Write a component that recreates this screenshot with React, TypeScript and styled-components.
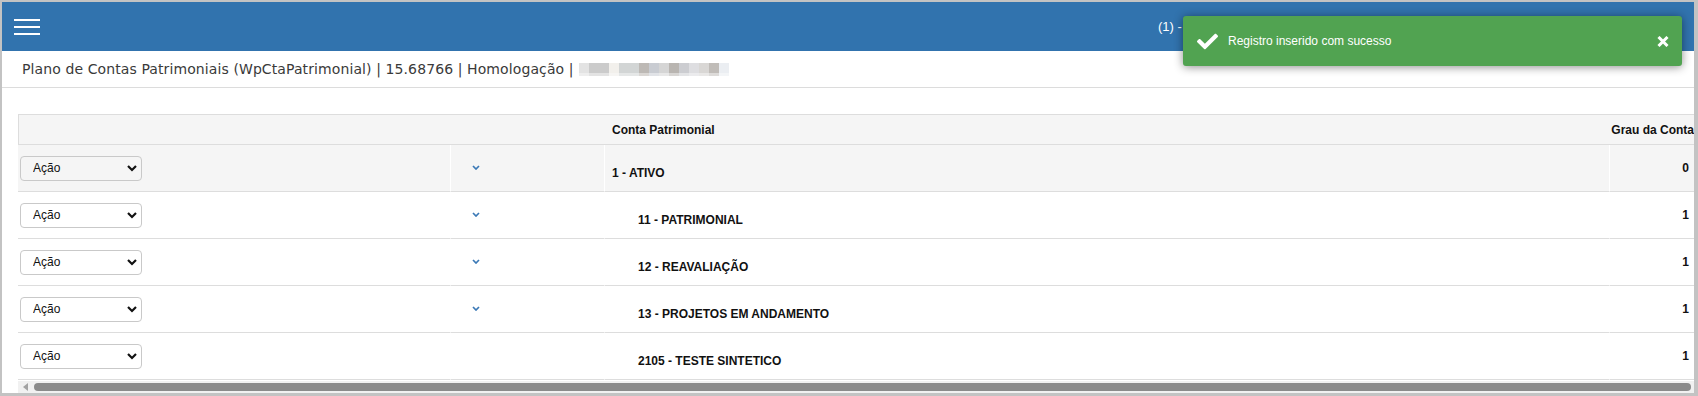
import React from "react";
import styled, {createGlobalStyle} from "styled-components";
import {FaCheck} from "react-icons/fa";

const GlobalStyle = createGlobalStyle`
  html, body {
    margin: 0;
    padding: 0;
    background: #fff;
  }
  body {
    font-family: "Liberation Sans", Arial, sans-serif;
  }
`

const Frame = styled.div`
  position: relative;
  width: 1698px;
  height: 396px;
  box-sizing: border-box;
  border-style: solid;
  border-color: #c3c3c3;
  border-width: 2px 4px 3px 2px;
  overflow: hidden;
  display: flex;
  flex-direction: column;
  background: #fff;
`

const TopBar = styled.header`
  height: 49px;
  flex-shrink: 0;
  background: #3173ae;
  display: flex;
  align-items: center;
  padding-left: 12px;
`

const MenuButton = styled.div`
  display: flex;
  align-items: center;
  cursor: pointer;
`

const UserInfo = styled.span`
  margin-left: auto;
  width: 536px;
  color: #fff;
  font-size: 13px;
  white-space: nowrap;
  overflow: hidden;
`

const TitleBar = styled.div`
  height: 36px;
  flex-shrink: 0;
  display: flex;
  align-items: center;
  padding-left: 20px;
  border-bottom: 1px solid #dcdcdc;
  color: #3a3a3a;
  font-family: "DejaVu Sans", Verdana, sans-serif;
  font-size: 14px;
  letter-spacing: 0.1px;
  white-space: nowrap;
`

const Redacted = styled.div`
  display: grid;
  grid-template-columns: repeat(15, 10px);
  grid-template-rows: 10px 3px;
  margin-left: 5px;
`

const Pixel = styled.span<{ $tone: string }>`
  background: ${p => p.$tone};
`

const Content = styled.main`
  flex: 1;
  display: flex;
  flex-direction: column;
  padding: 26px 0 0 16px;
  min-height: 0;
`

const TableViewport = styled.div`
  flex: 1;
  overflow: hidden;
  min-height: 0;
`

const Table = styled.table`
  width: 1690px;
  border-collapse: separate;
  border-spacing: 0;
  table-layout: fixed;
  font-size: 12px;
  color: #111;
`

const HeadCell = styled.th<{ $align?: string; $padLeft?: number; $padRight?: number }>`
  height: 29px;
  padding: 0 ${p => p.$padRight ?? 0}px 0 ${p => p.$padLeft ?? 7}px;
  background: #f5f5f5;
  border-top: 1px solid #dddddd;
  border-bottom: 1px solid #dddddd;
  text-align: ${p => p.$align ?? "left"};
  font-weight: bold;
  white-space: nowrap;
  &:first-child {
    border-left: 1px solid #dddddd;
  }
`

const Row = styled.tr<{ $shaded: boolean }>`
  background: ${p => p.$shaded ? "#f5f5f5" : "#fff"};
`

const Cell = styled.td`
  height: 47px;
  padding: 0;
  border-bottom: 1px solid #dddddd;
  border-right: 1px solid #fff;
  vertical-align: middle;
  box-sizing: border-box;
`

const ActionCell = styled(Cell)`
  padding-left: 2px;
`

const ToggleCell = styled(Cell)`
  padding-left: 21px;
`

const NameCell = styled(Cell)<{ $level: number }>`
  padding: 10px 0 0 ${p => 7 + p.$level * 26}px;
  font-weight: bold;
  white-space: nowrap;
`

const GradeCell = styled(Cell)`
  padding-right: 19px;
  text-align: right;
  font-weight: bold;
  border-right: none;
`

const SelectWrap = styled.div`
  position: relative;
  width: 122px;
  height: 25px;
`

const Select = styled.select`
  appearance: none;
  width: 100%;
  height: 100%;
  box-sizing: border-box;
  border: 1px solid #c9c9c9;
  border-radius: 4px;
  background: transparent;
  padding: 0 0 0 12px;
  font-family: "Liberation Sans", Arial, sans-serif;
  font-size: 12px;
  color: #111;
  outline: none;
`

const SelectArrow = styled.svg`
  position: absolute;
  right: 5px;
  top: 9px;
  pointer-events: none;
`

const Toggle = styled.svg`
  display: block;
  margin-top: -2px;
`

const ScrollBar = styled.div`
  height: 12px;
  flex-shrink: 0;
  margin-top: 1px;
  background: #f1f1f1;
  display: flex;
  align-items: center;
`

const ScrollArrow = styled.span`
  width: 0;
  height: 0;
  margin: 0 6px 0 5px;
  border-top: 4px solid transparent;
  border-bottom: 4px solid transparent;
  border-right: 5px solid #a3a3a3;
`

const ScrollThumb = styled.div`
  flex: 1;
  height: 8px;
  margin-right: 3px;
  border-radius: 4px;
  background: #8b8b8b;
`

const Toast = styled.div`
  position: absolute;
  top: 14px;
  right: 12px;
  width: 499px;
  height: 50px;
  box-sizing: border-box;
  display: flex;
  align-items: center;
  padding: 0 13px 0 14px;
  border-radius: 3px;
  background: #51a351;
  color: #fff;
  font-size: 12px;
  box-shadow: 0 1px 10px rgba(0, 0, 0, 0.45);
  z-index: 10;
`

const ToastIcon = styled(FaCheck)`
  width: 21px;
  height: 21px;
  margin-right: 10px;
  flex-shrink: 0;
`

const ToastText = styled.span`
  flex: 1;
`

const ToastClose = styled.svg`
  cursor: pointer;
`

interface Account {
  name: string;
  level: number;
  grade: number;
  expandable: boolean;
}

const accounts: Account[] = [
  {name: "1 - ATIVO", level: 0, grade: 0, expandable: true},
  {name: "11 - PATRIMONIAL", level: 1, grade: 1, expandable: true},
  {name: "12 - REAVALIAÇÃO", level: 1, grade: 1, expandable: true},
  {name: "13 - PROJETOS EM ANDAMENTO", level: 1, grade: 1, expandable: true},
  {name: "2105 - TESTE SINTETICO", level: 1, grade: 1, expandable: false},
]

// pixelated redaction of the user name
const redactTop = ["#e3e3e3", "#cbcbcb", "#cbcbcb", "#f2f0ec", "#d2d5d5", "#d2d5d5", "#bdb9b5", "#c9ccd2",
  "#d5d5d5", "#b9b5b1", "#cccdd1", "#dedee1", "#d9d7d5", "#c0bcb8", "#ebeef2"]
const redactBottom = ["#eeeeee", "#e3e3e3", "#e3e3e3", "#f6f5f3", "#e5e7e7", "#e5e7e7", "#dad7d4", "#e1e3e7",
  "#e8e8e8", "#d8d6d4", "#e3e4e6", "#ebebed", "#e9e8e7", "#dddbd9", "#f3f5f7"]

const App = () => {
  return (
    <Frame>
      <GlobalStyle/>
      <TopBar>
        <MenuButton>
          <svg width="26" height="16" viewBox="0 0 26 16">
            <rect x="0" y="0" width="26" height="2" fill="#fff"/>
            <rect x="0" y="7" width="26" height="2" fill="#fff"/>
            <rect x="0" y="14" width="26" height="2" fill="#fff"/>
          </svg>
        </MenuButton>
        <UserInfo>(1) - ADMINISTRADOR</UserInfo>
      </TopBar>

      <TitleBar>
        Plano de Contas Patrimoniais (WpCtaPatrimonial) | 15.68766 | Homologação |
        <Redacted>
          {redactTop.map((c, i) => <Pixel key={"t" + i} $tone={c}/>)}
          {redactBottom.map((c, i) => <Pixel key={"b" + i} $tone={c}/>)}
        </Redacted>
      </TitleBar>

      <Content>
        <TableViewport>
          <Table>
            <colgroup>
              <col style={{width: 433}}/>
              <col style={{width: 154}}/>
              <col style={{width: 1005}}/>
              <col/>
            </colgroup>
            <thead>
              <tr>
                <HeadCell/>
                <HeadCell/>
                <HeadCell>Conta Patrimonial</HeadCell>
                <HeadCell $align="right" $padLeft={0} $padRight={14}>Grau da Conta</HeadCell>
              </tr>
            </thead>
            <tbody>
              {accounts.map((acc, idx) => (
                <Row key={acc.name} $shaded={idx === 0}>
                  <ActionCell>
                    <SelectWrap>
                      <Select defaultValue="acao">
                        <option value="acao">Ação</option>
                      </Select>
                      <SelectArrow width="10" height="7" viewBox="0 0 10 7">
                        <polyline points="1,1 5,5 9,1" fill="none" stroke="#111" strokeWidth="2.2"/>
                      </SelectArrow>
                    </SelectWrap>
                  </ActionCell>
                  <ToggleCell>
                    {acc.expandable &&
                    <Toggle width="8" height="5" viewBox="0 0 8 5">
                      <polyline points="1,1 4,4 7,1" fill="none" stroke="#3b79b6" strokeWidth="1.7"/>
                    </Toggle>
                    }
                  </ToggleCell>
                  <NameCell $level={acc.level}>{acc.name}</NameCell>
                  <GradeCell>{acc.grade}</GradeCell>
                </Row>
              ))}
            </tbody>
          </Table>
        </TableViewport>
        <ScrollBar>
          <ScrollArrow/>
          <ScrollThumb/>
        </ScrollBar>
      </Content>

      <Toast>
        <ToastIcon/>
        <ToastText>Registro inserido com sucesso</ToastText>
        <ToastClose width="12" height="11" viewBox="0 0 12 11">
          <path d="M1.5 1 L10.5 10 M10.5 1 L1.5 10" stroke="#fff" strokeWidth="3"/>
        </ToastClose>
      </Toast>
    </Frame>
  )
}

export default App;
